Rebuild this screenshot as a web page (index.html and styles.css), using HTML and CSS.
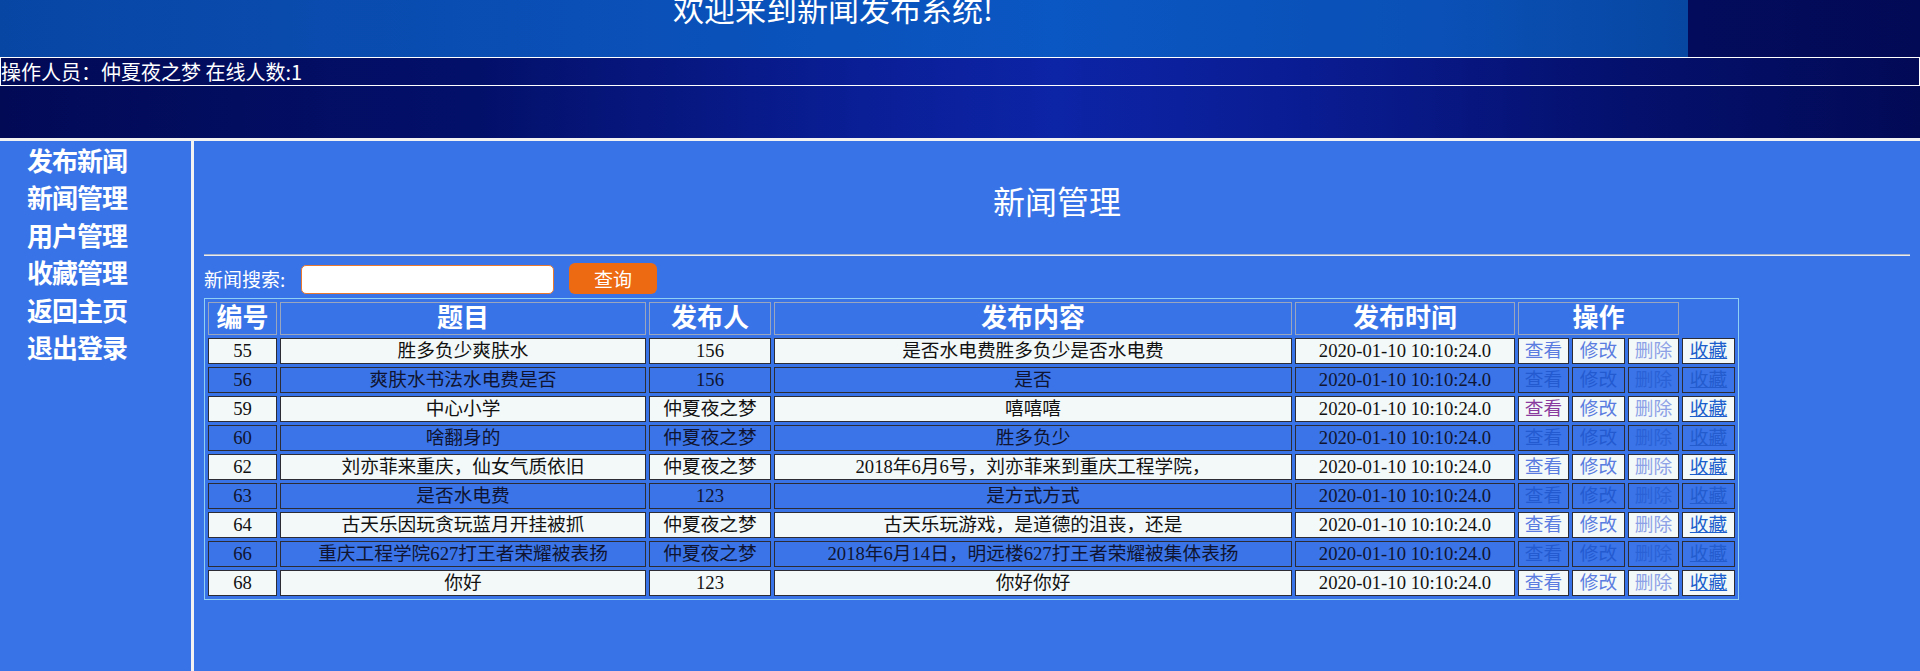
FILE: index.html
```html
<!DOCTYPE html>
<html lang="zh-CN">
<head>
<meta charset="utf-8">
<title>新闻发布系统</title>
<link rel="stylesheet" href="styles.css">
</head>
<body>
<div class="header">
  <div class="welcome"><h1>欢迎来到新闻发布系统!</h1></div>
  <div class="userbar">操作人员：仲夏夜之梦 在线人数:1</div>
</div>
<div class="main">
  <ul class="side">
    <li>发布新闻</li>
    <li>新闻管理</li>
    <li>用户管理</li>
    <li>收藏管理</li>
    <li>返回主页</li>
    <li>退出登录</li>
  </ul>
  <div class="content">
    <h2 class="page-title">新闻管理</h2>
    <hr class="rule">
    <div class="search">
      <span class="search-label">新闻搜索:</span>
      <input class="search-input" type="text">
      <button class="search-btn">查询</button>
    </div>
    <table class="news">
      <colgroup>
        <col class="c-id"><col class="c-title"><col class="c-author"><col class="c-body"><col class="c-time">
        <col class="c-op"><col class="c-op2"><col class="c-op"><col class="c-op2">
      </colgroup>
      <thead>
        <tr><th>编号</th><th>题目</th><th>发布人</th><th>发布内容</th><th>发布时间</th><th colspan="3">操作</th></tr>
      </thead>
      <tbody>
        <tr class="lt"><td>55</td><td>胜多负少爽肤水</td><td>156</td><td>是否水电费胜多负少是否水电费</td><td>2020-01-10 10:10:24.0</td><td><a class="view">查看</a></td><td><a class="edit">修改</a></td><td><a class="del">删除</a></td><td><a class="fav">收藏</a></td></tr>
        <tr class="bl"><td>56</td><td>爽肤水书法水电费是否</td><td>156</td><td>是否</td><td>2020-01-10 10:10:24.0</td><td><a class="view">查看</a></td><td><a class="edit">修改</a></td><td><a class="del">删除</a></td><td><a class="fav">收藏</a></td></tr>
        <tr class="lt"><td>59</td><td>中心小学</td><td>仲夏夜之梦</td><td>嘻嘻嘻</td><td>2020-01-10 10:10:24.0</td><td><a class="view visited">查看</a></td><td><a class="edit">修改</a></td><td><a class="del">删除</a></td><td><a class="fav">收藏</a></td></tr>
        <tr class="bl"><td>60</td><td>啥翻身的</td><td>仲夏夜之梦</td><td>胜多负少</td><td>2020-01-10 10:10:24.0</td><td><a class="view">查看</a></td><td><a class="edit">修改</a></td><td><a class="del">删除</a></td><td><a class="fav">收藏</a></td></tr>
        <tr class="lt"><td>62</td><td>刘亦菲来重庆，仙女气质依旧</td><td>仲夏夜之梦</td><td>2018年6月6号，刘亦菲来到重庆工程学院，</td><td>2020-01-10 10:10:24.0</td><td><a class="view">查看</a></td><td><a class="edit">修改</a></td><td><a class="del">删除</a></td><td><a class="fav">收藏</a></td></tr>
        <tr class="bl"><td>63</td><td>是否水电费</td><td>123</td><td>是方式方式</td><td>2020-01-10 10:10:24.0</td><td><a class="view">查看</a></td><td><a class="edit">修改</a></td><td><a class="del">删除</a></td><td><a class="fav">收藏</a></td></tr>
        <tr class="lt"><td>64</td><td>古天乐因玩贪玩蓝月开挂被抓</td><td>仲夏夜之梦</td><td>古天乐玩游戏，是道德的沮丧，还是</td><td>2020-01-10 10:10:24.0</td><td><a class="view">查看</a></td><td><a class="edit">修改</a></td><td><a class="del">删除</a></td><td><a class="fav">收藏</a></td></tr>
        <tr class="bl"><td>66</td><td>重庆工程学院627打王者荣耀被表扬</td><td>仲夏夜之梦</td><td>2018年6月14日，明远楼627打王者荣耀被集体表扬</td><td>2020-01-10 10:10:24.0</td><td><a class="view">查看</a></td><td><a class="edit">修改</a></td><td><a class="del">删除</a></td><td><a class="fav">收藏</a></td></tr>
        <tr class="lt"><td>68</td><td>你好</td><td>123</td><td>你好你好</td><td>2020-01-10 10:10:24.0</td><td><a class="view">查看</a></td><td><a class="edit">修改</a></td><td><a class="del">删除</a></td><td><a class="fav">收藏</a></td></tr>
      </tbody>
    </table>
  </div>
</div>
</body>
</html>
```
FILE: styles.css
```css
html, body {
  margin: 0;
  padding: 0;
  height: 100%;
}
body {
  background: #3973e8;
  font-family: "Liberation Serif", "Noto Sans CJK SC", serif;
  overflow: hidden;
}

.header {
  height: 138px;
  border-bottom: 3px solid #f2f2f2;
  background:
    linear-gradient(to right, #0846a4 0%, #0a4fb6 30%, #0a56c2 55%, #0a50b6 75%, #0747a2 87.9%, #030c5c 87.9%, #020a56 100%) top left / 100% 57px no-repeat,
    linear-gradient(to right, #020a56 0%, #03106a 25%, #0a1e96 45%, #0c24a6 55%, #0a1c92 68%, #04106c 85%, #020a56 100%);
  color: #fff;
  font-family: "Noto Sans CJK SC", "Liberation Sans", sans-serif;
}
.welcome {
  width: 1666px;
  height: 57px;
  text-align: center;
  overflow: hidden;
}
.welcome h1 {
  margin: -8px 0 0;
  font-size: 31px;
  line-height: 31px;
  font-weight: normal;
}
.userbar {
  height: 27px;
  border: 1px solid #fff;
  font-size: 20px;
  line-height: 27px;
  white-space: nowrap;
}

.main {
  display: flex;
  height: 530px;
}
.side {
  list-style: none;
  margin: 0;
  padding: 0 0 0 27px;
  width: 164px;
  border-right: 3px solid #f2f2f2;
  color: #fff;
  font-size: 26px;
  font-weight: bold;
  line-height: 37.4px;
  font-family: "Noto Sans CJK SC", serif;
}
.side li {
  letter-spacing: -1px;
}

.content {
  flex: 1;
  padding: 0 10px;
  color: #fff;
}
.page-title {
  margin: 39px 0 0;
  text-align: center;
  font-size: 32px;
  line-height: 40px;
  font-weight: normal;
  font-family: "Noto Sans CJK SC", "Liberation Sans", sans-serif;
}
.rule {
  margin: 34px 0 0;
  border: 0;
  border-top: 1px solid #a9b4c8;
  border-bottom: 1px solid #e8ecf2;
  height: 0;
}
.search {
  display: flex;
  align-items: center;
  height: 42px;
  font-family: "Noto Sans CJK SC", "Liberation Sans", sans-serif;
}
.search-label {
  font-size: 19px;
  width: 97px;
  margin-top: 2px;
}
.search-input {
  box-sizing: border-box;
  width: 253px;
  height: 29px;
  margin: 4px 0 0;
  border: 1px solid #e8792e;
  border-radius: 5px;
  background: #fff;
  outline: none;
}
.search-btn {
  box-sizing: border-box;
  width: 88px;
  height: 31px;
  margin: 2px 0 0 15px;
  border: 0;
  border-radius: 6px;
  background: #ee6a12;
  color: #fff;
  font-size: 19px;
  font-family: "Noto Sans CJK SC", "Liberation Sans", sans-serif;
  line-height: 31px;
  padding: 0;
}

.news {
  table-layout: fixed;
  width: 1535px;
  border-collapse: separate;
  border-spacing: 3px;
  border: 1px solid #8fd0f4;
  margin-top: 0;
}
.c-id { width: 69px; }
.c-title { width: 366px; }
.c-author { width: 122px; }
.c-body { width: 518px; }
.c-time { width: 220px; }
.c-op { width: 51px; }
.c-op2 { width: 53px; }

.news th {
  height: 33px;
  box-sizing: border-box;
  padding: 0;
  border: 1px solid #9aa6bd;
  color: #fff;
  font-size: 26px;
  line-height: 29px;
  font-weight: bold;
  font-family: "Liberation Serif", "Noto Sans CJK SC", serif;
}
.news td {
  height: 26px;
  box-sizing: border-box;
  padding: 0;
  border: 1px solid #2c2c34;
  text-align: center;
  color: #111;
  font-size: 18.7px;
  line-height: 24px;
  white-space: nowrap;
  overflow: hidden;
}
.lt td { background: #f3f9f9; }
.bl td { background: #3a74e8; color: #101430; }

.news a { cursor: pointer; }
.lt .view, .lt .edit { color: #5a7ce0; }
.lt .del { color: #8da1e6; }
.lt .fav { color: #1c5fcc; text-decoration: underline; }
.lt .view.visited { color: #8a3c9e; }
.bl .view, .bl .edit { color: #245ad0; }
.bl .del { color: #2a62d6; }
.bl .fav { color: #245cce; text-decoration: underline; }
```
